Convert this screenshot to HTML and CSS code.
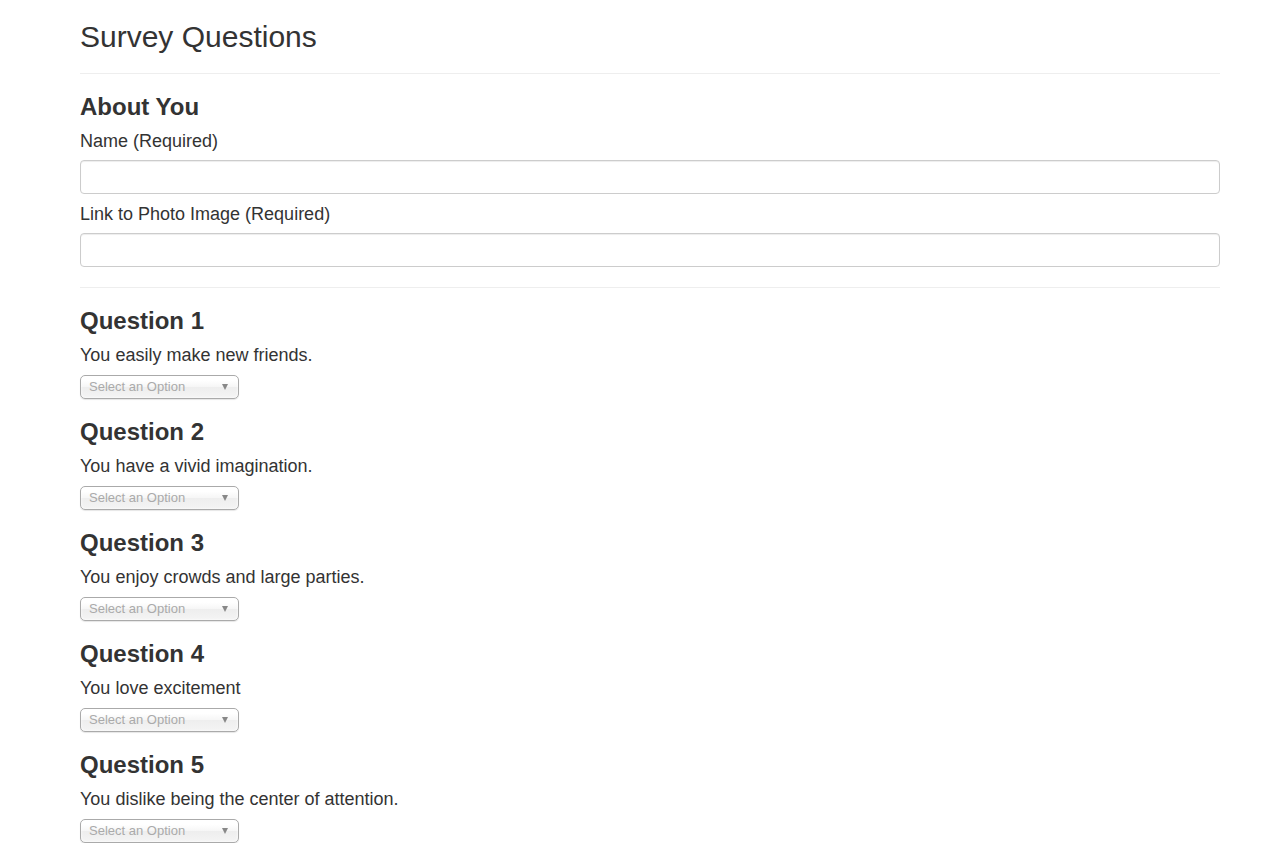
FILE: index.html
```html
<!DOCTYPE html>
<html lang="en">
<head>
<meta charset="utf-8">
<title>Survey Questions</title>
<link rel="stylesheet" href="styles.css">
</head>
<body>
<div class="container">
  <div class="page-header">
    <h2 class="title">Survey Questions</h2>
  </div>

  <h3 class="section">About You</h3>
  <label class="field-label">Name (Required)</label>
  <input class="form-control" type="text">
  <label class="field-label second">Link to Photo Image (Required)</label>
  <input class="form-control" type="text">

  <hr class="divider">

  <div class="question">
    <h3 class="section">Question 1</h3>
    <p class="prompt">You easily make new friends.</p>
    <div class="chosen"><span class="placeholder">Select an Option</span><span class="arrow"></span></div>
  </div>
  <div class="question">
    <h3 class="section">Question 2</h3>
    <p class="prompt">You have a vivid imagination.</p>
    <div class="chosen"><span class="placeholder">Select an Option</span><span class="arrow"></span></div>
  </div>
  <div class="question">
    <h3 class="section">Question 3</h3>
    <p class="prompt">You enjoy crowds and large parties.</p>
    <div class="chosen"><span class="placeholder">Select an Option</span><span class="arrow"></span></div>
  </div>
  <div class="question">
    <h3 class="section">Question 4</h3>
    <p class="prompt">You love excitement</p>
    <div class="chosen"><span class="placeholder">Select an Option</span><span class="arrow"></span></div>
  </div>
  <div class="question">
    <h3 class="section">Question 5</h3>
    <p class="prompt">You dislike being the center of attention.</p>
    <div class="chosen"><span class="placeholder">Select an Option</span><span class="arrow"></span></div>
  </div>
</div>
</body>
</html>
```

FILE: styles.css
```css
html, body {
  margin: 0;
  padding: 0;
  background: #fff;
}
body {
  font-family: "Liberation Sans", Arial, Helvetica, sans-serif;
  color: #333;
  font-size: 14px;
}
.container {
  width: 1140px;
  margin: 0 auto 0 80px;
  padding-top: 20px;
}
.page-header {
  border-bottom: 1px solid #eee;
  padding-bottom: 20px;
}
.title {
  margin: 0;
  font-size: 30px;
  line-height: 33px;
  font-weight: 400;
}
.section {
  margin: 20px 0 0;
  font-size: 24px;
  line-height: 26px;
  font-weight: 700;
}
.field-label {
  display: block;
  margin-top: 11px;
  font-size: 18px;
  line-height: 20px;
  font-weight: 400;
}
.field-label.second {
  margin-top: 10px;
}
.form-control {
  display: block;
  box-sizing: border-box;
  width: 100%;
  height: 34px;
  margin: 9px 0 0;
  padding: 6px 12px;
  border: 1px solid #ccc;
  border-radius: 4px;
  box-shadow: inset 0 1px 1px rgba(0,0,0,0.075);
  background: #fff;
  font: inherit;
}
.divider {
  margin: 20px 0 0;
  border: 0;
  border-top: 1px solid #eee;
  height: 0;
}
.question .section {
  margin-top: 20px;
}
.prompt {
  margin: 11px 0 0;
  font-size: 18px;
  line-height: 20px;
}
.chosen {
  position: relative;
  box-sizing: border-box;
  width: 159px;
  height: 24px;
  margin-top: 10px;
  padding-left: 8px;
  border: 1px solid #aaa;
  border-radius: 5px;
  background: linear-gradient(to bottom, #fff 20%, #f6f6f6 50%, #eee 52%, #f4f4f4 100%);
  box-shadow: inset 0 0 3px #fff, 0 1px 1px rgba(0,0,0,0.1);
  font-size: 13px;
  line-height: 22px;
  color: #aaa;
}
.arrow {
  position: absolute;
  right: 10px;
  top: 8px;
  width: 0;
  height: 0;
  border-left: 3.5px solid transparent;
  border-right: 3.5px solid transparent;
  border-top: 6px solid #888;
}
```
